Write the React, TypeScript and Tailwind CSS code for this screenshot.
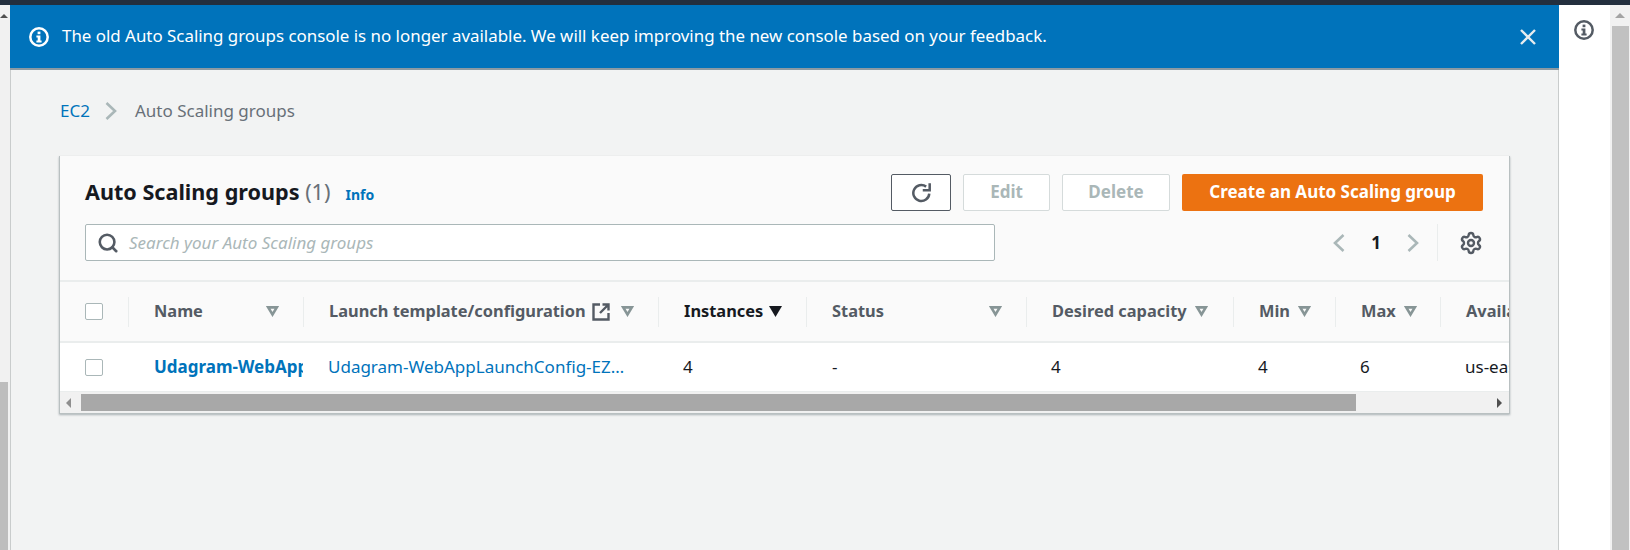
import { Search, Settings } from "lucide-react";

type Column = { label: string; width: string; sorted?: boolean; external?: boolean; gap?: boolean };

const columns: Column[] = [
  { label: "Name", width: "w-[175px]" },
  { label: "Launch template/configuration", width: "w-[355px]", external: true },
  { label: "Instances", width: "w-[148px]", sorted: true, gap: true },
  { label: "Status", width: "w-[220px]" },
  { label: "Desired capacity", width: "w-[207px]", gap: true },
  { label: "Min", width: "w-[102px]", gap: true },
  { label: "Max", width: "w-[105px]", gap: true },
  { label: "Availability Zones", width: "w-[220px]", gap: true },
];

function InfoIcon({ className }: { className: string }) {
  return (
    <svg viewBox="0 0 20 20" className={className} fill="none">
      <circle cx="10" cy="10" r="8.7" stroke="currentColor" strokeWidth="2.5" />
      <rect x="8.6" y="4.6" width="2.8" height="2.6" fill="currentColor" />
      <path d="M7.4 8.6h4v5h1.2v1.8H7.4v-1.8h1.3v-3.2H7.4z" fill="currentColor" />
    </svg>
  );
}

function SortCaret({ filled }: { filled?: boolean }) {
  return (
    <svg viewBox="0 0 12 10" className="w-[13px] h-[11px] shrink-0">
      {filled ? (
        <path d="M0 0h12L6 10z" fill="#16191f" />
      ) : (
        <path d="M2 1.2h8L6 7.8z" fill="none" stroke="#879596" strokeWidth="2.4" />
      )}
    </svg>
  );
}

function Chevron({ left, className }: { left?: boolean; className: string }) {
  return (
    <svg viewBox="0 0 12 18" className={className} fill="none" stroke="#aab7b8" strokeWidth="2.6">
      <path d={left ? "M10.5 1L2 9l8.5 8" : "M1.5 1L10 9l-8.5 8"} />
    </svg>
  );
}

function Checkbox() {
  return <div className="w-[18px] h-[17px] rounded-[2px] border border-[#aab7b8] bg-white" />;
}

function Triangle({ dir }: { dir: "up" | "left" | "right" }) {
  if (dir === "up") {
    return <div className="w-0 h-0 border-x-[5px] border-x-transparent border-b-[5px] border-b-[#a3a3a3]" />;
  }
  if (dir === "left") {
    return <div className="w-0 h-0 border-y-[5px] border-y-transparent border-r-[5px] border-r-[#8f8f8f]" />;
  }
  return <div className="w-0 h-0 border-y-[5px] border-y-transparent border-l-[5px] border-l-[#505050]" />;
}

export default function App() {
  return (
    <div className="w-[1630px] h-[550px] overflow-hidden flex flex-col bg-white text-[17px] text-[#16191f] font-['Noto_Sans',sans-serif]">
      <div className="h-[5px] bg-[#232f3e] shrink-0" />
      <div className="flex flex-1 min-h-0">
        {/* page scrollbar on the left */}
        <div className="w-[10px] bg-[#f1f1f1] flex flex-col shrink-0">
          <div className="h-[377px] pt-[9px]">
            <div className="w-0 h-0 border-x-[4px] border-x-transparent border-b-[4px] border-b-[#505050]" />
          </div>
          <div className="w-[8px] flex-1 bg-[#bdbdbd]" />
        </div>

        <div className="flex-1 min-w-0 bg-[#f2f3f3] border-x border-[#c9cccc] flex flex-col">
          <div className="h-[65px] shrink-0 -mx-px bg-[#0073bb] border-b-2 border-[#8b9aa3] flex items-center pl-[19px] pr-[23px] text-white">
            <InfoIcon className="w-[20px] h-[20px] text-white shrink-0" />
            <span className="ml-[13px] flex-1 text-[16.9px] mb-[2px]">
              The old Auto Scaling groups console is no longer available. We will keep improving the new console based on your feedback.
            </span>
            <svg viewBox="0 0 16 16" className="w-[16px] h-[16px] text-[#e6ecef]" fill="none" stroke="currentColor" strokeWidth="2.4">
              <path d="M1 1l14 14M15 1L1 15" />
            </svg>
          </div>

          <div className="flex items-center h-[40px] mt-[21px] ml-[49px]">
            <span className="text-[#0073bb]">EC2</span>
            <Chevron className="w-[12px] h-[18px] ml-[15px] mr-[18px]" />
            <span className="text-[#687078]">Auto Scaling groups</span>
          </div>

          <div className="mt-[25px] ml-[48px] w-[1451px] bg-[#fafafa] border-r border-b border-l border-[#b9c0c1] border-t-[#eaeded] shadow-[0_1px_2px_rgba(0,28,36,0.3)] overflow-hidden">
            <div className="pl-[25px] pr-[26px] pt-[17px]">
              <div className="flex items-center h-[38px]">
                <h1 className="text-[21.6px] font-bold leading-none">
                  Auto Scaling groups <span className="font-normal text-[#687078]">(1)</span>
                </h1>
                <span className="ml-[15px] mt-[4px] text-[14px] font-bold text-[#0073bb]">Info</span>
                <div className="ml-auto flex items-center gap-[12px] text-[17px] font-bold">
                  <button className="w-[60px] h-[37px] flex items-center justify-center border border-[#545b64] rounded-[2px] bg-white text-[#545b64]">
                    <svg viewBox="0 0 20 20" className="w-[21px] h-[21px]" fill="none" stroke="currentColor" strokeWidth="2.4">
                      <path d="M17.4 11a7.6 7.6 0 1 1-3-6.6" />
                      <path d="M17.8 1.2v6.6h-6.6" />
                    </svg>
                  </button>
                  <button className="w-[87px] h-[37px] border border-[#d5dbdb] rounded-[2px] bg-white text-[#aab7b8]">Edit</button>
                  <button className="w-[108px] h-[37px] border border-[#d5dbdb] rounded-[2px] bg-white text-[#aab7b8]">Delete</button>
                  <button className="w-[301px] h-[37px] rounded-[2px] bg-[#ec7211] text-white">Create an Auto Scaling group</button>
                </div>
              </div>
              <div className="flex items-center mt-[13px] h-[37px]">
                <div className="w-[910px] h-[37px] flex items-center border border-[#aab7b8] rounded-[2px] bg-white pl-[11px]">
                  <Search size={22} strokeWidth={2.8} className="text-[#545b64]" />
                  <span className="ml-[10px] italic text-[#aab7b8]">Search your Auto Scaling groups</span>
                </div>
                <div className="ml-auto flex items-center">
                  <Chevron left className="w-[12px] h-[18px]" />
                  <span className="w-[62px] text-center font-bold text-[#16191f]">1</span>
                  <Chevron className="w-[12px] h-[18px]" />
                  <div className="w-px h-[37px] bg-[#eaeded] ml-[18px] mr-[21px]" />
                  <Settings size={24} strokeWidth={2.4} className="text-[#545b64]" />
                </div>
              </div>
            </div>

            <div className="mt-[19px] overflow-hidden">
              <table className="table-fixed w-[1600px] border-collapse">
                <thead>
                  <tr className="h-[61px] border-y-2 border-[#eaeded]">
                    <th className="w-[68px] pl-[25px] text-left">
                      <Checkbox />
                    </th>
                    {columns.map((c) => (
                      <th key={c.label} className={`${c.width} p-0 text-left font-bold text-[16.4px]`}>
                        <div className="h-[30px] flex items-center border-l border-[#eaeded] pl-[25px] pr-[24px]">
                          <span className={`whitespace-nowrap ${c.sorted ? "text-[#16191f]" : "text-[#545b64]"}`}>{c.label}</span>
                          {c.external && (
                            <svg viewBox="0 0 18 18" className="w-[18px] h-[18px] ml-[6px] shrink-0" fill="none" stroke="#545b64" strokeWidth="2.4">
                              <path d="M8 1.5H1.5v15h15V10" />
                              <path d="M10.5 1.5h6v6M16.5 1.5L8 10" />
                            </svg>
                          )}
                          <span className={c.sorted ? "ml-[6px]" : c.gap ? "ml-[8px]" : "ml-auto"}>
                            <SortCaret filled={c.sorted} />
                          </span>
                        </div>
                      </th>
                    ))}
                  </tr>
                </thead>
                <tbody className="bg-white">
                  <tr className="h-[49px]">
                    <td className="pl-[25px]">
                      <Checkbox />
                    </td>
                    <td className="pl-[26px] pr-0">
                      <div className="w-[149px] overflow-hidden whitespace-nowrap font-bold text-[#0073bb]">Udagram-WebAppGroup</div>
                    </td>
                    <td className="pl-[25px]">
                      <div className="w-[300px] truncate text-[#0073bb]">Udagram-WebAppLaunchConfig-EZ1X8K2QJ4</div>
                    </td>
                    <td className="pl-[25px]">4</td>
                    <td className="pl-[26px]">-</td>
                    <td className="pl-[25px]">4</td>
                    <td className="pl-[25px]">4</td>
                    <td className="pl-[25px]">6</td>
                    <td className="pl-[25px] whitespace-nowrap">us-east-1a</td>
                  </tr>
                </tbody>
              </table>
            </div>

            <div className="h-[22px] bg-[#f1f1f1] flex items-center border-t border-[#eaeded]">
              <div className="w-[21px] pl-[6px]">
                <Triangle dir="left" />
              </div>
              <div className="w-[1275px] h-[17px] bg-[#a8a8a8]" />
              <div className="ml-auto pr-[7px]">
                <Triangle dir="right" />
              </div>
            </div>
          </div>
        </div>

        <div className="w-[51px] shrink-0 pl-[15px] pt-[15px]">
          <InfoIcon className="w-[20px] h-[20px] text-[#545b64]" />
        </div>

        {/* page scrollbar on the right */}
        <div className="w-[20px] shrink-0 bg-[#f1f1f1] flex flex-col items-center">
          <div className="h-[21px] flex items-center justify-center">
            <Triangle dir="up" />
          </div>
          <div className="w-[17px] flex-1 bg-[#c1c1c1]" />
        </div>
      </div>
    </div>
  );
}
